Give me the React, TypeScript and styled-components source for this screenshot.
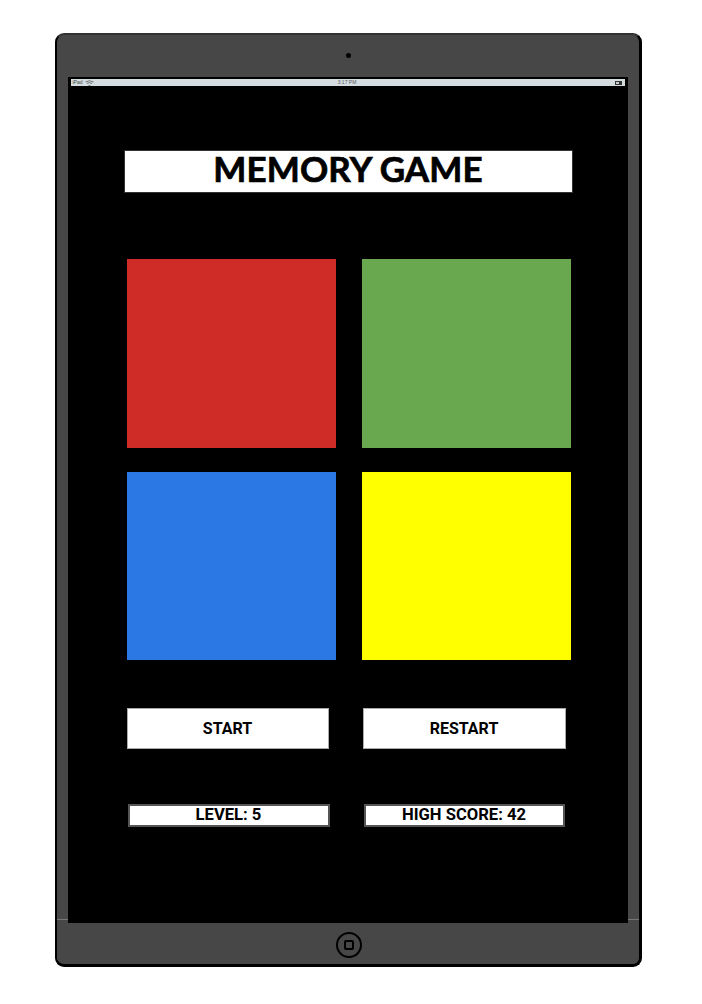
import styled, { createGlobalStyle } from "styled-components";

const GlobalStyle = createGlobalStyle`
  html, body {
    margin: 0;
    padding: 0;
    background: #fff;
  }
`;

const App = () => (
  <>
    <GlobalStyle />
    <Tablet>
      <Camera />
      <Screen>
        <StatusBar>
          <StatusLeft>
            <span>iPad</span>
            <svg width="9" height="6" viewBox="0 0 9 6" aria-hidden>
              <path d="M0.5 2 Q4.5 -0.5 8.5 2 M2 3.5 Q4.5 1.8 7 3.5 M3.5 5 L4.5 6 L5.5 5" fill="none" stroke="#666" strokeWidth="0.9" />
            </svg>
          </StatusLeft>
          <StatusTime>3:17 PM</StatusTime>
          <Battery />
        </StatusBar>
        <Game>
          <Title>MEMORY GAME</Title>
          <Pads>
            <Pad $color="#cf2c28" />
            <Pad $color="#6aa84f" />
            <Pad $color="#2b78e4" />
            <Pad $color="#ffff00" />
          </Pads>
          <Buttons>
            <ActionButton $width={202}>START</ActionButton>
            <ActionButton $width={203}>RESTART</ActionButton>
          </Buttons>
          <Stats>
            <Stat $width={202}>LEVEL: 5</Stat>
            <Stat $width={201}>HIGH SCORE: 42</Stat>
          </Stats>
        </Game>
      </Screen>
      <HomeButton>
        <HomeSquare />
      </HomeButton>
    </Tablet>
  </>
);

export default App;

const Tablet = styled.div`
  position: relative;
  box-sizing: border-box;
  width: 587px;
  height: 934px;
  margin: 33px 0 0 55px;
  border: 2px solid #000;
  border-top-color: #333;
  border-bottom-width: 3px;
  border-right-width: 3px;
  border-radius: 9px;
  background: #474747;
  display: flex;
  flex-direction: column;
  align-items: center;
  padding-top: 18px;

  &::before,
  &::after {
    content: "";
    position: absolute;
    top: 884px;
    width: 11px;
    height: 1px;
    background: #777;
  }

  &::before {
    left: 0;
  }

  &::after {
    right: 0;
  }
`;

const Camera = styled.div`
  width: 5px;
  height: 5px;
  border-radius: 50%;
  background: #000;
`;

const Screen = styled.div`
  box-sizing: border-box;
  width: 560px;
  height: 846px;
  margin-top: 19px;
  margin-left: -1px;
  padding: 2px 3px 0;
  background: #000;
  display: flex;
  flex-direction: column;
`;

const StatusBar = styled.div`
  height: 7px;
  flex-shrink: 0;
  background: #d5dcdf;
  display: grid;
  grid-template-columns: 1fr auto 1fr;
  align-items: center;
  padding: 0 3px 0 2px;
  font: 5px/7px "Liberation Sans", Arial, sans-serif;
  color: #444;
`;

const StatusLeft = styled.div`
  display: flex;
  align-items: center;
  gap: 2px;
`;

const StatusTime = styled.span`
  color: #556;
`;

const Battery = styled.div`
  justify-self: end;
  box-sizing: border-box;
  width: 7px;
  height: 4px;
  border: 1px solid #333;
  border-right-width: 3px;
  background: #ccc;
`;

const Game = styled.div`
  display: flex;
  flex-direction: column;
  padding: 64px 0 0 54px;
`;

const Title = styled.h1`
  box-sizing: border-box;
  width: 449px;
  height: 43px;
  margin: 0 0 66px -1px;
  border: 1px solid #333;
  background: #fff;
  color: #000;
  font: 700 35px/34px Lato, "Liberation Sans", sans-serif;
  text-align: center;
  letter-spacing: 0.1px;
  -webkit-text-stroke: 0.7px #000;
`;

const Pads = styled.div`
  display: grid;
  grid-template-columns: 209px 209px;
  grid-template-rows: 189px 188px;
  column-gap: 26px;
  row-gap: 24px;
  margin-left: 2px;
`;

const Pad = styled.div<{ $color: string }>`
  background: ${({ $color }) => $color};
`;

const Buttons = styled.div`
  display: flex;
  gap: 34px;
  margin: 48px 0 0 2px;
`;

const ActionButton = styled.button<{ $width: number }>`
  box-sizing: border-box;
  width: ${({ $width }) => $width}px;
  height: 41px;
  padding: 0;
  border: 1px solid #aaa;
  background: #fff;
  color: #000;
  font: 700 16px/1 Roboto, "Liberation Sans", Arial, sans-serif;
`;

const Stats = styled.div`
  display: flex;
  gap: 34px;
  margin: 55px 0 0 3px;
`;

const Stat = styled.div<{ $width: number }>`
  box-sizing: border-box;
  width: ${({ $width }) => $width}px;
  height: 23px;
  border: 2px solid #555;
  background: #fff;
  color: #000;
  font: 700 16.6px/18px Roboto, "Liberation Sans", Arial, sans-serif;
  text-align: center;
`;

const HomeButton = styled.div`
  box-sizing: border-box;
  width: 26px;
  height: 26px;
  margin: 9px 0 0 1px;
  border: 2.5px solid #000;
  border-radius: 50%;
  display: flex;
  align-items: center;
  justify-content: center;
`;

const HomeSquare = styled.div`
  box-sizing: border-box;
  width: 10px;
  height: 10px;
  border: 2px solid #000;
  border-radius: 2px;
`;
